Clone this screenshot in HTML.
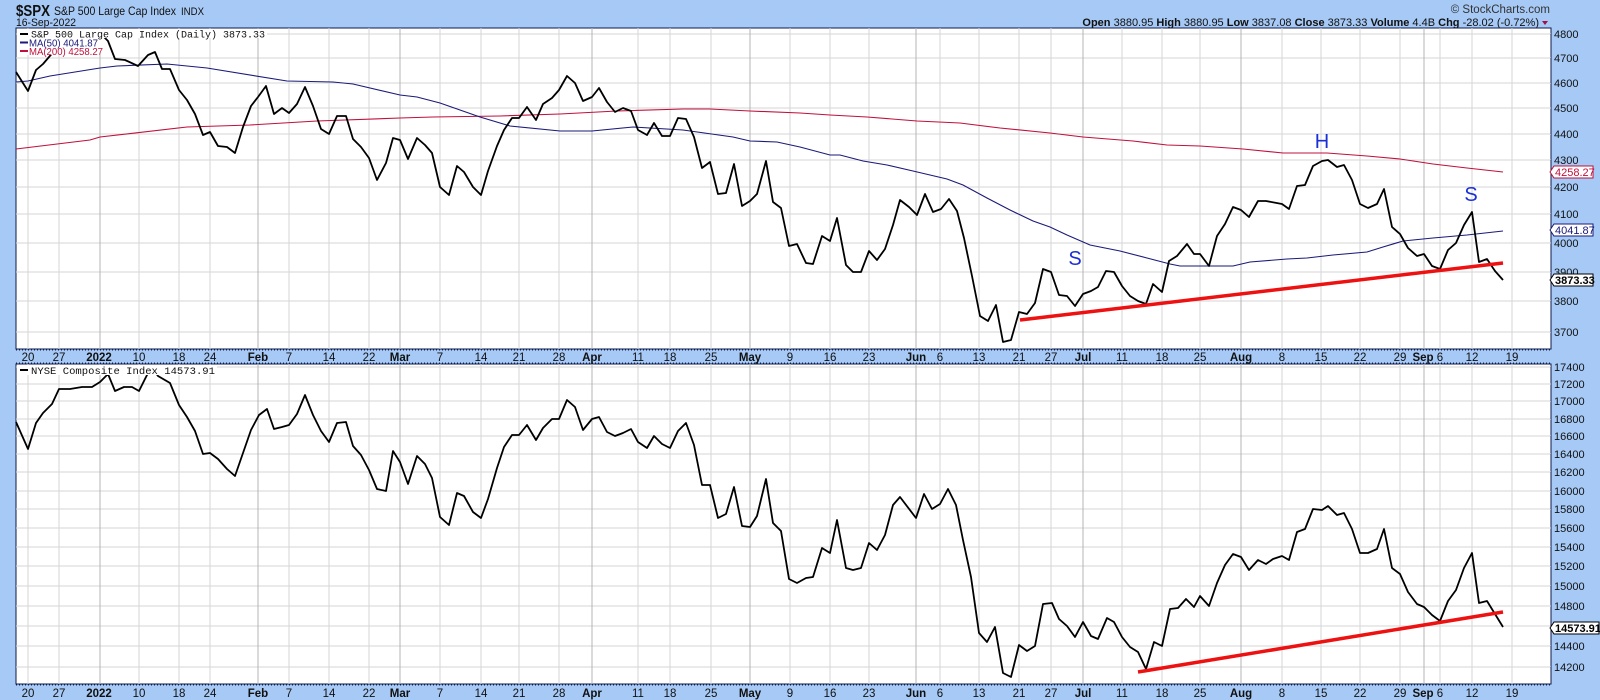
<!DOCTYPE html>
<html><head><meta charset="utf-8"><style>
html,body{margin:0;padding:0;background:#a6c9f5;}
svg{display:block;}
text{font-family:"Liberation Sans",sans-serif;}
.m{font-family:"Liberation Mono",monospace;font-size:10px;}
.ax{font-size:11px;fill:#111;}
.dl{font-size:11.5px;fill:#111;text-anchor:middle;}
.mo{font-weight:bold;}
.g{stroke:#d6d6d6;stroke-width:1;}
.gd{stroke:#b4b4b4;stroke-width:1;}
</style></head><body>
<svg width="1600" height="700" viewBox="0 0 1600 700" xmlns="http://www.w3.org/2000/svg">
<rect width="1600" height="700" fill="#a6c9f5"/>
<!-- header -->
<text x="16" y="16" font-size="16" font-weight="bold" fill="#111" textLength="34" lengthAdjust="spacingAndGlyphs">$SPX</text>
<text x="54" y="15" font-size="12" fill="#111" textLength="122" lengthAdjust="spacingAndGlyphs">S&amp;P 500 Large Cap Index</text>
<text x="181" y="15" font-size="11" fill="#111" textLength="23" lengthAdjust="spacingAndGlyphs">INDX</text>
<text x="16" y="26" font-size="11" fill="#111" textLength="60" lengthAdjust="spacingAndGlyphs">16-Sep-2022</text>
<text x="1550" y="13" font-size="11.5" fill="#333" text-anchor="end">© StockCharts.com</text>
<text x="1539" y="26" font-size="11" fill="#111" text-anchor="end"><tspan font-weight="bold">Open</tspan> 3880.95 <tspan font-weight="bold">High</tspan> 3880.95 <tspan font-weight="bold">Low</tspan> 3837.08 <tspan font-weight="bold">Close</tspan> 3873.33 <tspan font-weight="bold">Volume</tspan> 4.4B <tspan font-weight="bold">Chg</tspan> -28.02 (-0.72%)</text>
<path d="M1542 21 L1548 21 L1545 25 Z" fill="#a0104a"/>

<!-- panels -->
<rect x="16" y="28" width="1535" height="321" fill="#fff" stroke="#0c1a4a" stroke-width="1"/>
<rect x="16" y="364" width="1535" height="320" fill="#fff" stroke="#0c1a4a" stroke-width="1"/>

<g class="g">
<line x1="16" x2="1551" y1="34" y2="34"/><line x1="16" x2="1551" y1="58" y2="58"/><line x1="16" x2="1551" y1="83" y2="83"/><line x1="16" x2="1551" y1="108" y2="108"/><line x1="16" x2="1551" y1="134" y2="134"/><line x1="16" x2="1551" y1="160" y2="160"/><line x1="16" x2="1551" y1="187" y2="187"/><line x1="16" x2="1551" y1="214" y2="214"/><line x1="16" x2="1551" y1="243" y2="243"/><line x1="16" x2="1551" y1="272" y2="272"/><line x1="16" x2="1551" y1="301" y2="301"/><line x1="16" x2="1551" y1="332" y2="332"/>
</g>
<g class="g">
<line x1="16" x2="1551" y1="367" y2="367"/><line x1="16" x2="1551" y1="384" y2="384"/><line x1="16" x2="1551" y1="401" y2="401"/><line x1="16" x2="1551" y1="419" y2="419"/><line x1="16" x2="1551" y1="436" y2="436"/><line x1="16" x2="1551" y1="454" y2="454"/><line x1="16" x2="1551" y1="472" y2="472"/><line x1="16" x2="1551" y1="491" y2="491"/><line x1="16" x2="1551" y1="509" y2="509"/><line x1="16" x2="1551" y1="528" y2="528"/><line x1="16" x2="1551" y1="547" y2="547"/><line x1="16" x2="1551" y1="566" y2="566"/><line x1="16" x2="1551" y1="586" y2="586"/><line x1="16" x2="1551" y1="606" y2="606"/><line x1="16" x2="1551" y1="626" y2="626"/><line x1="16" x2="1551" y1="646" y2="646"/><line x1="16" x2="1551" y1="667" y2="667"/>
</g>
<g class="g">
<path d="M28 28V349M59 28V349M139 28V349M179 28V349M210 28V349M289 28V349M329 28V349M369 28V349M440 28V349M481 28V349M519 28V349M559 28V349M638 28V349M670 28V349M711 28V349M790 28V349M830 28V349M869 28V349M940 28V349M979 28V349M1019 28V349M1051 28V349M1122 28V349M1162 28V349M1200 28V349M1282 28V349M1321 28V349M1360 28V349M1400 28V349M1440 28V349M1472 28V349M1512 28V349"/>
<path d="M28 364V684M59 364V684M139 364V684M179 364V684M210 364V684M289 364V684M329 364V684M369 364V684M440 364V684M481 364V684M519 364V684M559 364V684M638 364V684M670 364V684M711 364V684M790 364V684M830 364V684M869 364V684M940 364V684M979 364V684M1019 364V684M1051 364V684M1122 364V684M1162 364V684M1200 364V684M1282 364V684M1321 364V684M1360 364V684M1400 364V684M1440 364V684M1472 364V684M1512 364V684"/>
</g>
<g class="gd">
<path d="M100 28V349M258 28V349M400 28V349M592 28V349M750 28V349M916 28V349M1083 28V349M1241 28V349M1424 28V349"/>
<path d="M100 364V684M258 364V684M400 364V684M592 364V684M750 364V684M916 364V684M1083 364V684M1241 364V684M1424 364V684"/>
</g>

<polyline fill="none" stroke="#c0103c" stroke-width="1.1" points="16,149 90,140 100,137 187,127 250,125 317,121 400,118 433,117 500,116 560,114 617,111 683,109 710,109 750,111 800,113 830,115 867,117 917,121 960,123 1000,128 1050,133 1083,137 1133,141 1167,145 1200,146 1243,149 1283,153 1327,153 1367,156 1400,159 1433,164 1467,168 1503,172"/>
<polyline fill="none" stroke="#1a1a7a" stroke-width="1.1" points="16,82 28,81 50,76 100,68 117,66 167,64 207,68 287,81 333,82 353,84 400,95 417,97 440,103 480,117 510,126 560,131 592,131 633,127 683,130 733,137 750,141 777,142 800,147 830,155 840,155 863,161 887,165 913,171 947,179 963,185 987,198 1010,210 1033,221 1050,227 1067,235 1090,245 1120,251 1147,258 1170,264 1180,266 1233,266 1250,262 1287,259 1307,258 1333,255 1367,252 1383,247 1403,241 1433,238 1467,235 1503,231"/>
<polyline fill="none" stroke="#000" stroke-width="1.8" stroke-linejoin="round" points="16,72 28,91 36,70 43,64 55,50 65,42 75,40 85,43 95,42 100,33 108,41 115,59 125,60 138,66 148,55 155,52 162,69 170,69 179,90 187,100 195,114 203,135 210,132 218,146 227,147 235,153 243,127 251,106 258,97 266,86 274,114 282,108 289,113 297,104 305,87 313,106 321,129 329,134 337,116 346,116 353,139 361,147 369,158 377,180 386,163 393,138 400,140 408,159 417,138 425,145 432,153 440,187 449,195 457,166 464,172 473,187 481,195 488,171 497,146 504,130 512,118 519,118 527,107 536,120 543,104 552,98 559,90 567,76 575,83 583,101 592,97 599,88 607,102 615,112 623,108 631,111 638,130 647,135 654,123 662,136 670,136 678,118 686,119 694,137 702,168 710,162 718,194 726,193 734,164 742,206 750,201 757,194 766,161 773,202 781,208 789,246 797,244 806,263 813,264 822,236 830,241 837,218 846,265 853,272 861,272 869,251 877,260 885,249 893,225 900,200 909,207 917,215 925,194 933,212 941,209 949,199 957,211 964,238 972,276 980,316 988,321 996,305 1003,342 1011,340 1019,312 1027,314 1035,303 1043,269 1051,272 1059,295 1067,296 1075,306 1083,294 1091,291 1098,287 1106,271 1114,272 1122,286 1130,296 1138,301 1146,304 1153,284 1162,292 1169,261 1177,256 1187,244 1194,254 1200,254 1209,266 1217,236 1225,224 1233,207 1241,210 1249,217 1258,201 1266,201 1282,204 1289,209 1297,186 1305,185 1313,166 1322,161 1328,160 1337,167 1344,165 1352,180 1360,204 1368,208 1377,204 1384,189 1392,227 1400,234 1408,248 1417,256 1424,254 1432,266 1440,269 1448,250 1456,243 1464,225 1472,212 1479,262 1487,259 1495,271 1503,280"/>
<line x1="1020" y1="320" x2="1503" y2="263" stroke="#ee1111" stroke-width="3.5"/>
<text x="1075" y="265" font-size="20" fill="#1a2fd6" text-anchor="middle">S</text>
<text x="1322" y="148" font-size="20" fill="#1a2fd6" text-anchor="middle">H</text>
<text x="1471" y="201" font-size="20" fill="#1a2fd6" text-anchor="middle">S</text>

<rect x="17" y="29" width="250" height="9" fill="#fff"/>
<rect x="17" y="38" width="86" height="8" fill="#fff"/>
<rect x="17" y="46" width="88" height="9" fill="#fff"/>
<line x1="20" y1="34" x2="28" y2="34" stroke="#000" stroke-width="2"/>
<text class="m" x="31" y="37.5" fill="#111" textLength="234" lengthAdjust="spacingAndGlyphs">S&amp;P 500 Large Cap Index (Daily) 3873.33</text>
<line x1="20" y1="42.5" x2="28" y2="42.5" stroke="#1a1a7a" stroke-width="2"/>
<text x="29" y="46.5" font-size="10" fill="#1a1a7a" textLength="69" lengthAdjust="spacingAndGlyphs">MA(50) 4041.87</text>
<line x1="20" y1="51" x2="28" y2="51" stroke="#c0103c" stroke-width="2"/>
<text x="29" y="55" font-size="10" fill="#c0103c" textLength="74" lengthAdjust="spacingAndGlyphs">MA(200) 4258.27</text>

<polyline fill="none" stroke="#000" stroke-width="1.8" stroke-linejoin="round" points="16,422 28,449 36,423 43,413 52,404 59,389 70,389 82,387 92,387 100,382 108,374 115,391 124,387 132,387 139,391 147,375 152,368 158,376 170,383 179,405 187,417 195,431 203,454 210,453 218,459 227,469 235,476 243,453 251,430 259,415 267,409 274,429 282,427 289,425 297,414 305,395 313,415 321,431 329,442 337,423 346,422 353,446 361,455 369,470 377,489 386,491 393,451 400,462 408,484 417,456 425,464 432,478 440,517 449,525 457,493 464,496 473,512 481,518 488,499 497,468 504,447 512,435 519,435 527,425 536,440 543,428 552,419 559,419 567,400 575,407 583,430 592,419 599,417 607,432 615,436 623,433 631,429 638,442 647,448 654,436 662,444 670,448 678,431 686,423 694,445 702,485 710,485 718,518 726,514 734,487 742,526 750,527 757,516 766,479 773,523 781,531 789,579 797,583 806,578 813,577 822,548 830,553 837,520 846,568 853,570 861,568 869,543 877,550 885,535 893,505 900,497 916,518 924,494 932,509 940,504 948,489 956,505 963,540 971,577 979,633 987,642 995,627 1003,673 1011,677 1019,645 1027,651 1035,646 1043,604 1052,603 1059,619 1067,626 1075,637 1083,622 1091,636 1098,639 1107,618 1114,622 1122,637 1130,647 1138,652 1146,669 1154,642 1162,646 1170,609 1178,608 1186,599 1194,607 1200,596 1209,606 1217,583 1225,565 1233,554 1241,557 1249,570 1258,560 1266,564 1273,559 1282,556 1289,560 1297,532 1305,529 1313,509 1322,510 1328,506 1337,515 1344,513 1352,529 1360,553 1368,553 1377,549 1384,529 1392,568 1400,574 1408,592 1417,604 1424,607 1432,615 1440,621 1448,601 1456,590 1464,568 1472,553 1479,603 1487,601 1495,614 1503,627"/>
<line x1="1138" y1="672" x2="1503" y2="612" stroke="#ee1111" stroke-width="3.5"/>
<rect x="17" y="365" width="200" height="10" fill="#fff"/>
<line x1="20" y1="370" x2="28" y2="370" stroke="#000" stroke-width="2"/>
<text class="m" x="31" y="374" fill="#111" textLength="184" lengthAdjust="spacingAndGlyphs">NYSE Composite Index 14573.91</text>

<line x1="16" y1="350" x2="1551" y2="350" stroke="#0c1a4a" stroke-dasharray="1,2"/>
<line x1="16" y1="363" x2="1551" y2="363" stroke="#0c1a4a" stroke-dasharray="1,2"/>
<line x1="16" y1="685" x2="1551" y2="685" stroke="#0c1a4a" stroke-dasharray="1,2"/>
<g class="dl">
<text x="28" y="361">20</text><text x="59" y="361">27</text><text x="99" y="361" class="mo">2022</text><text x="139" y="361">10</text><text x="179" y="361">18</text><text x="210" y="361">24</text><text x="258" y="361" class="mo">Feb</text><text x="289" y="361">7</text><text x="329" y="361">14</text><text x="369" y="361">22</text><text x="400" y="361" class="mo">Mar</text><text x="440" y="361">7</text><text x="481" y="361">14</text><text x="519" y="361">21</text><text x="559" y="361">28</text><text x="592" y="361" class="mo">Apr</text><text x="638" y="361">11</text><text x="670" y="361">18</text><text x="711" y="361">25</text><text x="750" y="361" class="mo">May</text><text x="790" y="361">9</text><text x="830" y="361">16</text><text x="869" y="361">23</text><text x="916" y="361" class="mo">Jun</text><text x="940" y="361">6</text><text x="979" y="361">13</text><text x="1019" y="361">21</text><text x="1051" y="361">27</text><text x="1083" y="361" class="mo">Jul</text><text x="1122" y="361">11</text><text x="1162" y="361">18</text><text x="1200" y="361">25</text><text x="1241" y="361" class="mo">Aug</text><text x="1282" y="361">8</text><text x="1321" y="361">15</text><text x="1360" y="361">22</text><text x="1400" y="361">29</text><text x="1423" y="361" class="mo">Sep</text><text x="1440" y="361">6</text><text x="1472" y="361">12</text><text x="1512" y="361">19</text>
</g>
<g class="dl">
<text x="28" y="697">20</text><text x="59" y="697">27</text><text x="99" y="697" class="mo">2022</text><text x="139" y="697">10</text><text x="179" y="697">18</text><text x="210" y="697">24</text><text x="258" y="697" class="mo">Feb</text><text x="289" y="697">7</text><text x="329" y="697">14</text><text x="369" y="697">22</text><text x="400" y="697" class="mo">Mar</text><text x="440" y="697">7</text><text x="481" y="697">14</text><text x="519" y="697">21</text><text x="559" y="697">28</text><text x="592" y="697" class="mo">Apr</text><text x="638" y="697">11</text><text x="670" y="697">18</text><text x="711" y="697">25</text><text x="750" y="697" class="mo">May</text><text x="790" y="697">9</text><text x="830" y="697">16</text><text x="869" y="697">23</text><text x="916" y="697" class="mo">Jun</text><text x="940" y="697">6</text><text x="979" y="697">13</text><text x="1019" y="697">21</text><text x="1051" y="697">27</text><text x="1083" y="697" class="mo">Jul</text><text x="1122" y="697">11</text><text x="1162" y="697">18</text><text x="1200" y="697">25</text><text x="1241" y="697" class="mo">Aug</text><text x="1282" y="697">8</text><text x="1321" y="697">15</text><text x="1360" y="697">22</text><text x="1400" y="697">29</text><text x="1423" y="697" class="mo">Sep</text><text x="1440" y="697">6</text><text x="1472" y="697">12</text><text x="1512" y="697">19</text>
</g>

<line x1="1551" y1="28" x2="1551" y2="349" stroke="#0c1a4a" stroke-dasharray="1,2"/>
<line x1="1551" y1="364" x2="1551" y2="684" stroke="#0c1a4a" stroke-dasharray="1,2"/>
<g class="ax">
<text x="1554" y="38">4800</text><text x="1554" y="62">4700</text><text x="1554" y="87">4600</text><text x="1554" y="112">4500</text><text x="1554" y="138">4400</text><text x="1554" y="164">4300</text><text x="1554" y="191">4200</text><text x="1554" y="218">4100</text><text x="1554" y="247">4000</text><text x="1554" y="276">3900</text><text x="1554" y="305">3800</text><text x="1554" y="336">3700</text>
<text x="1554" y="371">17400</text><text x="1554" y="388">17200</text><text x="1554" y="405">17000</text><text x="1554" y="423">16800</text><text x="1554" y="440">16600</text><text x="1554" y="458">16400</text><text x="1554" y="476">16200</text><text x="1554" y="495">16000</text><text x="1554" y="513">15800</text><text x="1554" y="532">15600</text><text x="1554" y="551">15400</text><text x="1554" y="570">15200</text><text x="1554" y="590">15000</text><text x="1554" y="610">14800</text><text x="1554" y="650">14400</text><text x="1554" y="671">14200</text>
</g>
<path d="M1550 172 L1554 166 H1593 V178 H1554 Z" fill="#fff" stroke="#c0103c"/>
<text x="1555" y="176" font-size="11" fill="#c0103c">4258.27</text>
<path d="M1550 230 L1554 224 H1593 V236 H1554 Z" fill="#fff" stroke="#1a1a7a"/>
<text x="1555" y="234" font-size="11" fill="#1a1a7a">4041.87</text>
<path d="M1550 280 L1554 274 H1593 V286 H1554 Z" fill="#fff" stroke="#000"/>
<text x="1555" y="284" font-size="11" font-weight="bold" fill="#000">3873.33</text>
<path d="M1550 628 L1554 622 H1599 V634 H1554 Z" fill="#fff" stroke="#000"/>
<text x="1555" y="632" font-size="11" font-weight="bold" fill="#000">14573.91</text>
</svg>
</body></html>
